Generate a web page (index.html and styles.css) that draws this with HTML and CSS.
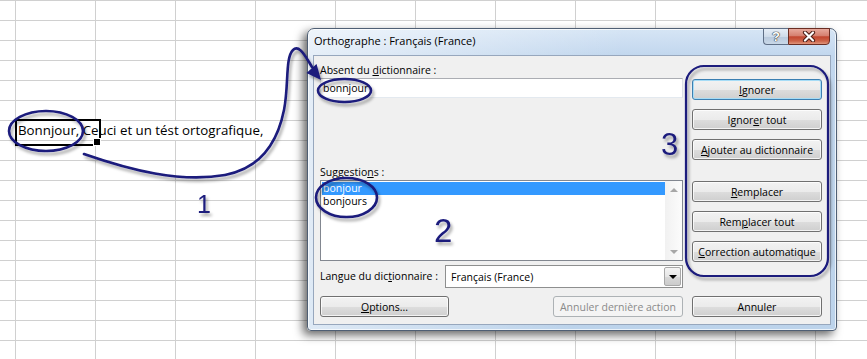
FILE: index.html
```html
<!DOCTYPE html>
<html lang="fr">
<head>
    <meta charset="UTF-8">
    <title>Orthographe : Français (France)</title>
    <link rel="stylesheet" href="styles.css">
</head>
<body>
    <div class="sheet">
        <div class="cell active">Bonnjour, Ceuci et un tést ortografique,</div>

        <div class="dialog">
            <div class="titlebar">
                <span class="caption">Orthographe : Français (France)</span>
                <div class="capButtons">
                    <span class="capBtn help">?</span>
                    <span class="capBtn close">
                        <svg width="14" height="11" viewBox="0 0 14 11">
                            <path d="M3 1.5 L11 9.5 M11 1.5 L3 9.5" stroke="#4a1c14" stroke-width="4.2" stroke-linecap="round"/>
                            <path d="M3 1.5 L11 9.5 M11 1.5 L3 9.5" stroke="#fff" stroke-width="2.2" stroke-linecap="round"/>
                        </svg>
                    </span>
                </div>
            </div>

            <div class="client">
                <div class="leftCol">
                    <span class="lbl firstLbl">Absent du <u>d</u>ictionnaire :</span>
                    <div class="textbox">bonnjour</div>

                    <span class="lbl suggLbl">Suggestio<u>n</u>s :</span>
                    <div class="listbox">
                        <div class="items">
                            <div class="item selected">bonjour</div>
                            <div class="item">bonjours</div>
                        </div>
                        <div class="scrollbar">
                            <span class="arrow up"></span>
                            <span class="arrow down"></span>
                        </div>
                    </div>

                    <div class="langRow">
                        <span class="lbl">Langue du dic<u>t</u>ionnaire :</span>
                        <div class="select">
                            <span>Français (France)</span>
                            <span class="dropBtn"></span>
                        </div>
                    </div>

                    <div class="bottomRow">
                        <button class="btn optBtn"><u>O</u>ptions...</button>
                        <button class="btn undoBtn" disabled>Annuler dernière action</button>
                    </div>
                </div>

                <div class="rightCol">
                    <button class="btn default"><u>I</u>gnorer</button>
                    <button class="btn">Ignor<u>e</u>r tout</button>
                    <button class="btn groupEnd"><u>A</u>jouter au dictionnaire</button>
                    <button class="btn"><u>R</u>emplacer</button>
                    <button class="btn">Rem<u>p</u>lacer tout</button>
                    <button class="btn"><u>C</u>orrection automatique</button>
                    <button class="btn cancel">Annuler</button>
                </div>
            </div>
        </div>

        <!-- hand drawn notes over the screenshot -->
        <svg class="notes" width="867" height="359" viewBox="0 0 867 359">
            <defs>
                <filter id="shade" x="-30%" y="-30%" width="160%" height="160%">
                    <feDropShadow dx="2" dy="3" stdDeviation="1.8" flood-color="#000" flood-opacity="0.35"/>
                </filter>
            </defs>
            <g filter="url(#shade)">
                <g fill="none" stroke="#1a1a7c" stroke-width="2.6" stroke-linecap="round">
                    <ellipse cx="46" cy="131" rx="37" ry="20"/>
                    <path d="M84 154 C 130 170 180 183 225 175 C 262 168 278 140 284 110 C 289 85 285 58 293 50 C 298 45 303 52 309 62 L 312 67"/>
                    <ellipse cx="344.5" cy="90.5" rx="26.5" ry="11.5"/>
                    <ellipse cx="346.5" cy="197.5" rx="30.5" ry="19.5"/>
                    <rect x="686" y="66" width="142" height="210" rx="18" stroke-width="2.2"/>
                </g>
                <path d="M321 80 L306.5 73 L316.5 64 Z" fill="#1a1a7c"/>
                <g fill="#1a1a7c" font-family="Liberation Sans, Arial, sans-serif">
                    <text x="197" y="213" font-size="25">1</text>
                    <text x="434" y="242" font-size="33">2</text>
                    <text x="661" y="155" font-size="31">3</text>
                </g>
            </g>
        </svg>
    </div>
</body>
</html>
```

FILE: styles.css
```css
*{
    box-sizing: border-box;
}

body{
    margin: 0;
    background: #fff;
    font-family: "Open Sans", "Liberation Sans", sans-serif;
}

/* spreadsheet behind the dialog */
.sheet{
    position: relative;
    width: 867px;
    height: 359px;
    overflow: hidden;
    display: grid;
    grid-template-columns: 15px repeat(11, 80px);
    grid-template-rows: repeat(18, 20px);
    background-color: #fff;
    background-image:
        linear-gradient(to right, #d0d0d0 1px, transparent 1px),
        linear-gradient(to bottom, #d0d0d0 1px, transparent 1px);
    background-size: 80px 100%, 100% 20px;
    background-position: 15px 0, 0 0;
}

.cell{
    grid-column: 2 / span 4;
    grid-row: 7;
    margin: 1px 0 0 1px;
    padding-left: 2px;
    background: #fff;
    font-size: 13.3px;
    line-height: 19px;
    white-space: nowrap;
    color: #000;
}

.active{
    position: relative;
}

.active::before{
    content: "";
    position: absolute;
    left: -1px;
    top: -2px;
    width: 82px;
    height: 23px;
    border: 2px solid #000;
}

.active::after{
    content: "";
    position: absolute;
    left: 77px;
    top: 17px;
    width: 6px;
    height: 6px;
    background: #000;
    border: 1px solid #fff;
}

/* dialog window */
.dialog{
    position: absolute;
    left: 307px;
    top: 28px;
    width: 530px;
    height: 303px;
    display: flex;
    flex-direction: column;
    padding: 0 5px 5px;
    border: 1px solid #4f5f74;
    border-radius: 7px 7px 4px 4px;
    background:
        linear-gradient(100deg, rgba(255,255,255,.6), rgba(255,255,255,0) 55%),
        linear-gradient(to bottom, #d6e5f5 0, #c2d7ee 26px, #bcd3eb 100%);
    box-shadow: -4px 4px 10px rgba(0,0,0,.6), inset 0 0 0 1px rgba(255,255,255,.7);
}

.titlebar{
    height: 26px;
    display: flex;
    align-items: flex-start;
}

.caption{
    padding: 4px 0 0 1px;
    font-size: 11px;
    line-height: 15px;
    color: #000;
}

.capButtons{
    display: flex;
    margin: -1px 1px 0 auto;
}

.capBtn{
    height: 17px;
    display: flex;
    align-items: center;
    justify-content: center;
    border: 1px solid #5f6f86;
}

.help{
    width: 25px;
    border-right: 0;
    border-radius: 0 0 0 4px;
    background: linear-gradient(to bottom, #e6eef7 0, #cfdcea 50%, #b8c9dd 51%, #c9d8e8 100%);
    font-family: "Liberation Sans", sans-serif;
    font-weight: bold;
    font-size: 13px;
    color: #fff;
    text-shadow: 0 0 1px #333, 0 0 1px #333, 0 0 1px #333;
}

.close{
    width: 42px;
    border-radius: 0 0 4px 0;
    border-color: #6a2d22;
    background: linear-gradient(to bottom, #e8a99c 0, #d5806f 45%, #c2462f 52%, #cc6348 80%, #e0967c 100%);
}

.client{
    flex: 1;
    display: flex;
    gap: 9px;
    padding: 0 8px 7px 6px;
    background: #f0f0f0;
    border: 1px solid #97a7bd;
    font-size: 10.5px;
    color: #000;
}

.leftCol{
    width: 363px;
    display: flex;
    flex-direction: column;
}

.lbl{
    line-height: 15px;
    white-space: nowrap;
}

.firstLbl{
    margin-top: 7px;
}

.suggLbl{
    margin-top: 67px;
}

.textbox{
    height: 20px;
    padding-left: 2px;
    line-height: 18px;
    background: #fff;
    border: 1px solid #abadb3;
    border-left-color: #dbdfe6;
    border-right-color: #dbdfe6;
    border-bottom-color: #e3e9ef;
}

.listbox{
    height: 81px;
    display: flex;
    background: #fff;
    border: 1px solid #828790;
}

.items{
    flex: 1;
    padding: 1px 0 0 1px;
}

.item{
    height: 13px;
    line-height: 13px;
    padding-left: 1px;
}

.selected{
    background: #3399ff;
    color: #fff;
}

.scrollbar{
    width: 17px;
    display: flex;
    flex-direction: column;
    justify-content: space-between;
    background: linear-gradient(to right, #f1f1f1, #fcfcfc);
}

.arrow{
    height: 17px;
    display: flex;
    align-items: center;
    justify-content: center;
}

.arrow::before{
    content: "";
    border-left: 4px solid transparent;
    border-right: 4px solid transparent;
}

.up::before{
    border-bottom: 4px solid #a7a7a7;
}

.down::before{
    border-top: 4px solid #a7a7a7;
}

.langRow{
    height: 23px;
    margin-top: 4px;
    display: flex;
    align-items: center;
    justify-content: space-between;
}

.select{
    width: 238px;
    height: 23px;
    display: flex;
    align-items: center;
    justify-content: space-between;
    padding: 1px 1px 1px 5px;
    background: #fff;
    border: 1px solid #8e8f8f;
}

.dropBtn{
    width: 17px;
    height: 19px;
    display: flex;
    align-items: center;
    justify-content: center;
    border: 1px solid #a8a8a8;
    border-radius: 2px;
    background: linear-gradient(to bottom, #f4f4f4 0, #e6e6e6 50%, #d8d8d8 51%, #cccccc 100%);
}

.dropBtn::before{
    content: "";
    border-left: 4px solid transparent;
    border-right: 4px solid transparent;
    border-top: 4px solid #000;
}

.bottomRow{
    margin-top: 8px;
    display: flex;
    justify-content: space-between;
}

/* Buttons */
.btn{
    height: 21px;
    padding: 0;
    font: inherit;
    color: #000;
    text-align: center;
    white-space: nowrap;
    border: 1px solid #707070;
    border-radius: 3px;
    background: linear-gradient(to bottom, #f2f2f2 0%, #ebebeb 50%, #dddddd 51%, #cfcfcf 100%);
    box-shadow: inset 0 0 0 1px rgba(255,255,255,.75);
}

.optBtn{
    width: 129px;
}

.undoBtn{
    width: 130px;
}

.btn:disabled{
    color: #8a8a8a;
    border-color: #adb2b5;
    background: #f4f4f4;
    box-shadow: none;
}

.rightCol{
    width: 130px;
    display: flex;
    flex-direction: column;
    padding-top: 23px;
}

.rightCol .btn{
    width: 130px;
    margin-bottom: 9px;
}

.rightCol .groupEnd{
    margin-bottom: 21px;
}

.rightCol .cancel{
    margin: auto 0 0;
}

.btn.default{
    border-color: #3c7fb1;
    box-shadow: inset 0 0 0 1px #a6dcf6;
}

u{
    text-underline-offset: 1px;
}

.notes{
    position: absolute;
    left: 0;
    top: 0;
    pointer-events: none;
}
```
